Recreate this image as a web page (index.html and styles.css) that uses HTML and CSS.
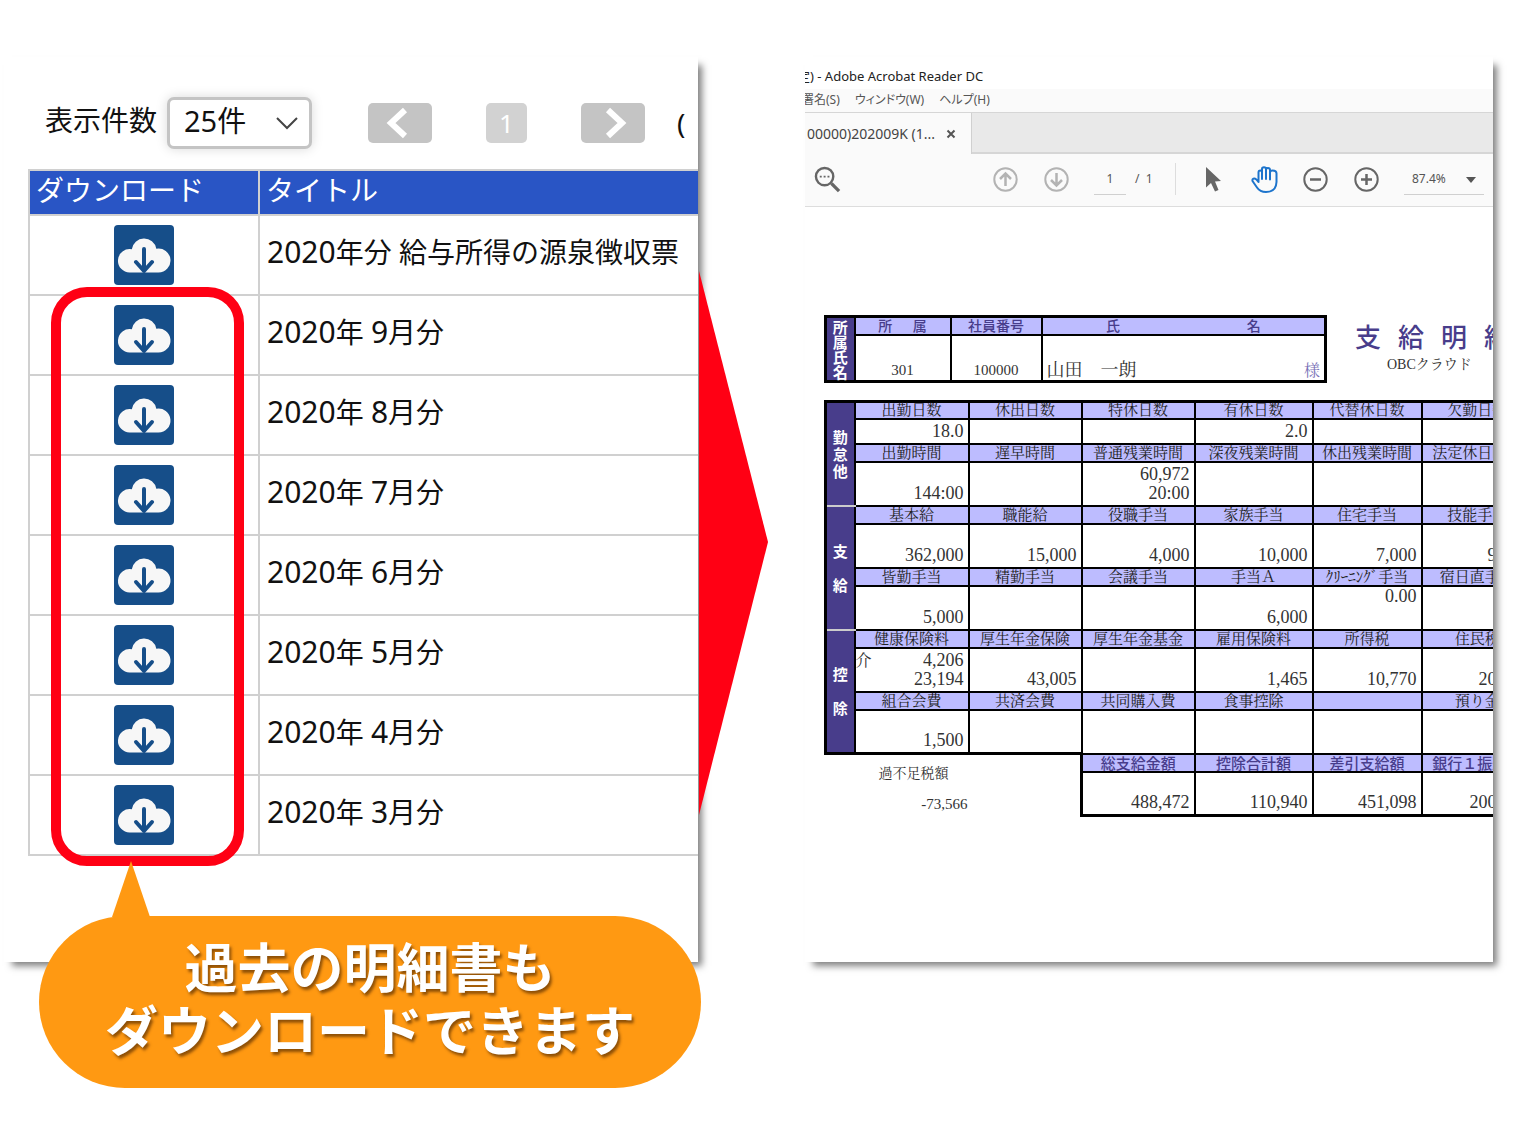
FILE: index.html
```
<!DOCTYPE html>
<html lang="ja">
<head>
<meta charset="utf-8">
<title>過去の明細書のダウンロード</title>
<link rel="stylesheet" href="styles.css">
</head>
<body>
<svg class="defs" aria-hidden="true">
  <symbol id="cloud" viewBox="0 0 60 60">
    <path fill="#f7f7f7" d="M16 47.500A11.700 11.700 0 1 1 17.800 24.300A12.400 12.400 0 0 1 42.300 23.700A12 12 0 1 1 44.500 47.500Z"/>
    <path fill="none" stroke="#164e89" stroke-width="4" stroke-linecap="round" stroke-linejoin="round" d="M30 24V46M22 37L30 46L38 37"/>
  </symbol>
</svg>
<main class="scene">
  <section class="panel list">
    <div class="clip list-body">
      <div class="pager">
        <label for="count">表示件数</label>
        <span class="count">
          <select id="count"><option>25件</option></select>
          <svg viewBox="0 0 24 14"><path d="M2 2L12 12L22 2" fill="none" stroke="#444" stroke-width="2"/></svg>
        </span>
        <button class="nav prev" aria-label="前へ"><svg viewBox="0 0 24 32"><path d="M20 3L6 16L20 29" fill="none" stroke="#fff" stroke-width="6"/></svg></button>
        <button class="nav current">1</button>
        <button class="nav next" aria-label="次へ"><svg viewBox="0 0 24 32"><path d="M4 3L18 16L4 29" fill="none" stroke="#fff" stroke-width="6"/></svg></button>
        <span class="total">(</span>
      </div>
      <div class="files-wrap">
        <table class="files">
          <thead><tr><th class="dl">ダウンロード</th><th>タイトル</th></tr></thead>
          <tbody>
            <tr><td class="dl"><button aria-label="ダウンロード"><svg><use href="#cloud"/></svg></button></td><td><span class="num">2020</span>年分 給与所得の源泉徴収票</td></tr>
            <tr><td class="dl"><button aria-label="ダウンロード"><svg><use href="#cloud"/></svg></button></td><td><span class="num">2020</span>年 <span class="num">9</span>月分</td></tr>
            <tr><td class="dl"><button aria-label="ダウンロード"><svg><use href="#cloud"/></svg></button></td><td><span class="num">2020</span>年 <span class="num">8</span>月分</td></tr>
            <tr><td class="dl"><button aria-label="ダウンロード"><svg><use href="#cloud"/></svg></button></td><td><span class="num">2020</span>年 <span class="num">7</span>月分</td></tr>
            <tr><td class="dl"><button aria-label="ダウンロード"><svg><use href="#cloud"/></svg></button></td><td><span class="num">2020</span>年 <span class="num">6</span>月分</td></tr>
            <tr><td class="dl"><button aria-label="ダウンロード"><svg><use href="#cloud"/></svg></button></td><td><span class="num">2020</span>年 <span class="num">5</span>月分</td></tr>
            <tr><td class="dl"><button aria-label="ダウンロード"><svg><use href="#cloud"/></svg></button></td><td><span class="num">2020</span>年 <span class="num">4</span>月分</td></tr>
            <tr><td class="dl"><button aria-label="ダウンロード"><svg><use href="#cloud"/></svg></button></td><td><span class="num">2020</span>年 <span class="num">3</span>月分</td></tr>
          </tbody>
        </table>
        <div class="highlight"></div>
      </div>
    </div>
    <div class="callout">
      <svg class="tail" viewBox="0 0 38 56"><path d="M19 0L38 56H0Z" fill="#ff9912"/></svg>
      <p>過去の明細書も<br>ダウンロードできます</p>
    </div>
  </section>

  <svg class="arrow" viewBox="0 0 69 544" preserveAspectRatio="none"><path d="M0 0L69 271L0 544Z" fill="#ff0014"/></svg>

  <section class="panel viewer">
    <div class="clip">
      <div class="titlebar"><span>定) - Adobe Acrobat Reader DC</span></div>
      <nav class="menubar"><span class="cut">署名(S)</span><span>ウィンドウ(W)</span><span>ヘルプ(H)</span></nav>
      <div class="tabs"><div class="tab">00000)202009K (1...<button aria-label="閉じる"><svg viewBox="0 0 10 10"><path d="M1.500 1.500L8.500 8.500M8.500 1.500L1.500 8.500" stroke="#555" stroke-width="2"/></svg></button></div></div>
      <div class="tools">
        <button class="find" aria-label="検索"><svg viewBox="0 0 28 28"><g fill="none" stroke="#666"><circle cx="11" cy="11" r="9" stroke-width="2.500"/><path d="M18 18L26 26" stroke-width="3.500"/><path d="M6 11H16" stroke-width="2" stroke-dasharray="2 2"/></g></svg></button>
        <button aria-label="前のページ"><svg viewBox="0 0 27 27"><g fill="none" stroke="#b3b3b3" stroke-width="2"><circle cx="13.500" cy="13.500" r="11.200"/><path d="M13.500 20V8M8 13L13.500 7.500L19 13" stroke-width="2.500"/></g></svg></button>
        <button aria-label="次のページ"><svg viewBox="0 0 27 27"><g fill="none" stroke="#b3b3b3" stroke-width="2"><circle cx="13.500" cy="13.500" r="11.200"/><path d="M13.500 7V19M8 14L13.500 19.500L19 14" stroke-width="2.500"/></g></svg></button>
        <input class="page" aria-label="ページ" value="1">
        <span class="pages">/&nbsp; 1</span>
        <button aria-label="選択"><svg viewBox="0 0 27 27"><path fill="#666" d="M6 1V21.500L11 17L15 25.500L18.500 24L15 15.500L21 15Z"/></svg></button>
        <button aria-label="手のひら"><svg viewBox="0 0 27 27"><path fill="none" stroke="#1d74cc" stroke-width="2" stroke-linecap="round" stroke-linejoin="round" d="M7.500 16V6.500Q7.500 4.500 9.200 4.500Q11 4.500 11 6.500V13M11 12V3Q11 1.200 13 1.200Q15 1.200 15 3V13M15 4Q15 2 16.900 2Q19 2 19 4V13.500M19 13.500V6.500Q19 4.500 21.500 4.500Q25.500 4.500 25.500 7.500V16Q25 26 15 26Q9 26 6 21.500L1.500 15Q1 12.500 3.500 12.500Q5 12.500 7.500 16"/></svg></button>
        <button aria-label="縮小"><svg viewBox="0 0 27 27"><g fill="none" stroke="#666" stroke-width="2"><circle cx="13.500" cy="13.500" r="11.200"/><path d="M8 13.500H19" stroke-width="2.500"/></g></svg></button>
        <button aria-label="拡大"><svg viewBox="0 0 27 27"><g fill="none" stroke="#666" stroke-width="2"><circle cx="13.500" cy="13.500" r="11.200"/><path d="M8 13.500H19M13.500 8V19" stroke-width="2.500"/></g></svg></button>
        <span class="zoom"><select aria-label="倍率"><option>87.4%</option></select><svg viewBox="0 0 10 6"><path d="M0 0H10L5 6Z" fill="#555"/></svg></span>
      </div>

      <div class="paper">
        <div class="paper-head">
          <table class="slip person">
            <colgroup><col class="c-side"><col class="c-dept"><col class="c-id"><col class="c-name"></colgroup>
            <tr class="h"><th class="side tight" rowspan="2">所<br>属<br>氏<br>名</th><th>所　&nbsp; 属</th><th>社員番号</th><th><div class="spread"><span>氏</span><span>名</span></div></th></tr>
            <tr class="v"><td>301</td><td>100000</td><td><div class="name"><span>山田　一朗</span><span class="sama">様</span></div></td></tr>
          </table>
          <div class="heading">
            <h1><span>支</span><span>給</span><span>明</span><span>細</span><span>書</span></h1>
            <p>OBCクラウド</p>
          </div>
        </div>

        <table class="slip pay">
          <colgroup><col class="c-side"><col class="c1"><col class="c2"><col class="c2"><col class="c4"><col class="c5"><col class="c6"></colgroup>
          <tbody>
            <tr class="h first"><th class="side" rowspan="4">勤<br>怠<br>他</th><th>出勤日数</th><th>休出日数</th><th>特休日数</th><th>有休日数</th><th>代替休日数</th><th>欠勤日数</th></tr>
            <tr class="v short"><td>18.0</td><td></td><td></td><td>2.0</td><td></td><td></td></tr>
            <tr class="h"><th>出勤時間</th><th>遅早時間</th><th>普通残業時間</th><th>深夜残業時間</th><th>休出残業時間</th><th>法定休日時間</th></tr>
            <tr class="v"><td>144:00</td><td></td><td>60,972<br>20:00</td><td></td><td></td><td></td></tr>
          </tbody>
          <tbody>
            <tr class="h"><th class="side wide" rowspan="4">支<br>給</th><th>基本給</th><th>職能給</th><th>役職手当</th><th>家族手当</th><th>住宅手当</th><th>技能手当</th></tr>
            <tr class="v"><td>362,000</td><td>15,000</td><td>4,000</td><td>10,000</td><td>7,000</td><td>9,000</td></tr>
            <tr class="h"><th>皆勤手当</th><th>精勤手当</th><th>会議手当</th><th>手当Ａ</th><th>ｸﾘｰﾆﾝｸﾞ手当</th><th>宿日直手当</th></tr>
            <tr class="v"><td>5,000</td><td></td><td></td><td>6,000</td><td class="upper">0.00</td><td></td></tr>
          </tbody>
          <tbody>
            <tr class="h"><th class="side wide" rowspan="4">控<br>除</th><th>健康保険料</th><th>厚生年金保険</th><th>厚生年金基金</th><th>雇用保険料</th><th>所得税</th><th>住民税</th></tr>
            <tr class="v"><td><span class="mark">介</span>4,206<br>23,194</td><td>43,005</td><td></td><td>1,465</td><td>10,770</td><td>20,000</td></tr>
            <tr class="h"><th>組合会費</th><th>共済会費</th><th>共同購入費</th><th>食事控除</th><th></th><th>預り金</th></tr>
            <tr class="v"><td>1,500</td><td></td><td></td><td></td><td></td><td></td></tr>
          </tbody>
          <tbody class="sum">
            <tr class="h"><td class="adjust" colspan="3" rowspan="2"><div class="adjust-label">過不足税額</div><div class="adjust-value">-73,566</div></td><th>総支給金額</th><th>控除合計額</th><th>差引支給額</th><th>銀行１振込額</th></tr>
            <tr class="v"><td>488,472</td><td>110,940</td><td>451,098</td><td>200,000</td></tr>
          </tbody>
        </table>
      </div>
    </div>
  </section>
</main>
</body>
</html>
```
FILE: styles.css
```
* { box-sizing: border-box; }

body {
  margin: 0;
  background: #fff;
  color: #111;
  font-family: "Noto Sans", "Noto Sans CJK JP", sans-serif;
}

button, input, select { font: inherit; color: inherit; margin: 0; }
button { padding: 0; border: 0; background: none; display: block; flex: none; }
p, h1 { margin: 0; }
svg { display: block; }
.defs { position: absolute; width: 0; height: 0; }

.scene {
  display: grid;
  grid-template-columns: minmax(0, 694fr) 107px minmax(0, 688fr);
  padding: 57px 31px 164px 4px;
}

.panel {
  position: relative;
  background: #fff;
  box-shadow: 6px 6px 7px -2px rgba(0, 0, 0, 0.5);
}
.clip { overflow: hidden; height: 100%; }
.arrow { width: 69px; height: 544px; margin: 214px 0 0 1px; position: relative; }

/* Download list */
.list-body { padding: 40px 0 106px 24px; font-size: 28px; }
.pager { display: flex; align-items: center; padding-left: 17px; height: 52px; white-space: nowrap; }
.pager label { line-height: 42px; margin: 0 10px 6px 0; flex: none; }
.count { position: relative; flex: none; width: 145px; margin-right: 56px; }
.count select {
  appearance: none;
  width: 100%;
  height: 52px;
  padding: 0 0 5px 14px;
  border: 3px solid #c4c4c4;
  border-radius: 7px;
  background: #fff;
  box-shadow: 0 0 12px rgba(0, 0, 0, 0.15);
  font-size: 29px;
}
.count svg { position: absolute; right: 13px; top: 19px; width: 24px; height: 14px; pointer-events: none; }
.nav { height: 40px; border-radius: 5px; background: #c4c4c4; color: #fff; display: flex; align-items: center; justify-content: center; }
.nav svg { width: 24px; height: 32px; }
.prev, .next { width: 64px; }
.prev { padding-right: 6px; }
.next { padding-left: 6px; }
.current { width: 41px; margin: 0 54px; background: #d2d2d2; font-size: 26px; }
.total { margin-left: 32px; }

.files-wrap { position: relative; margin-top: 20px; }
.files { width: 100%; border-collapse: collapse; table-layout: fixed; white-space: nowrap; }
.files th, .files td { border: 2px solid #d0d0d0; border-right: 0; text-align: left; font-weight: 400; }
.files th { height: 45px; padding: 0 0 4px 6px; background: #2955c5; color: #fff; line-height: 39px; }
.files td { height: 80px; padding: 0 0 6px 7px; line-height: 42px; }
.files .dl { width: 230px; }
.files td.dl { padding: 0; }
.files td button { width: 60px; height: 60px; margin: 0 auto; border-radius: 4px; background: #164e89; }
.files td svg { width: 60px; height: 60px; }
.num { font-size: 30px; }

.highlight {
  position: absolute;
  left: 23px;
  top: 118px;
  bottom: -10px;
  width: 193px;
  border: 10px solid #ff0014;
  border-radius: 36px;
  pointer-events: none;
}

.callout {
  position: absolute;
  z-index: 1;
  left: 35px;
  right: -3px;
  bottom: -126px;
  height: 172px;
  border-radius: 86px;
  background: #ff9912;
  color: #fff;
  font: bold 53px/63px "Noto Sans CJK JP", sans-serif;
  text-align: center;
  white-space: nowrap;
  text-shadow: 2px 3px 3px rgba(80, 40, 0, 0.65);
  padding-top: 18px;
}
.tail { position: absolute; left: 73px; top: -55px; width: 38px; height: 56px; }

/* Document viewer */
.viewer { font-size: 14px; color: #333; white-space: nowrap; }
.titlebar { display: flex; height: 32px; padding-top: 9px; font-size: 13px; line-height: 20px; color: #222; }
.titlebar span { margin-left: -8px; }
.menubar {
  display: flex;
  gap: 15px;
  height: 23px;
  background: #fafafa;
  font-size: 12px;
  line-height: 22px;
  color: #555;
  font-feature-settings: "palt";
}
.menubar .cut { margin-left: -3px; }
.tabs { display: flex; height: 42px; background: #e9e9e9; border-top: 1px solid #d6d6d6; box-shadow: inset 0 -2px #d6d6d6; }
.tab { display: flex; align-items: center; gap: 11px; width: 167px; padding-left: 2px; background: #fafafa; border-right: 1px solid #d0d0d0; color: #444; font-size: 14px; }
.tab svg { width: 10px; height: 10px; }
.tools { display: flex; align-items: center; gap: 24px; height: 53px; padding: 0 0 2px 9px; background: #fafafa; border-bottom: 1px solid #ddd; color: #555; font-size: 12px; }
.tools button svg { width: 27px; height: 27px; }
.tools .find { margin-right: 127px; }
.page { width: 32px; height: 32px; padding: 0; border: 0; border-bottom: 1px solid #d0d0d0; background: none; text-align: center; flex: none; }
.pages { width: 41px; margin-left: -15px; height: 32px; line-height: 32px; border-right: 1px solid #ddd; flex: none; }
.zoom { position: relative; width: 80px; flex: none; }
.zoom select { appearance: none; width: 100%; height: 32px; padding: 0 8px; border: 0; border-bottom: 1px solid #d0d0d0; border-radius: 0; background: none; font-size: 12px; }
.zoom svg { position: absolute; right: 8px; top: 14px; width: 10px; height: 6px; pointer-events: none; }

/* Pay slip */
.paper { padding: 108px 0 0 19px; background: #fff; }
.paper-head { display: flex; align-items: flex-start; gap: 28px; margin-bottom: 17px; }
.slip {
  border-collapse: collapse;
  table-layout: fixed;
  border: 3px solid #000;
  font-family: "Liberation Serif", "Noto Serif CJK JP", "Noto Sans CJK JP", serif;
  flex: none;
}
.slip th { padding: 0; border: 2px solid #000; background: #bdbcff; color: #222; font-size: 15px; line-height: 14px; font-weight: 400; }
.slip td { padding: 0 4px 2px; border: 2px solid #000; font-size: 18px; line-height: 19px; text-align: right; vertical-align: bottom; color: #333; }
.slip th.side {
  background: #483d8b;
  color: #fff;
  font: bold 15px/17px "Noto Sans CJK JP", sans-serif;
  border-bottom-color: #ccc;
  border-top-color: #ccc;
}
.slip th.tight { line-height: 15px; }
.slip th.wide { line-height: 34px; }
.h { height: 18px; }
.h.first { height: 17px; }
.v { height: 44px; }
.v.short { height: 25px; }
.c-side { width: 29px; }

.person { width: 503px; }
.person .v { height: 47px; }
.c-dept { width: 96px; }
.c-id { width: 91px; }
.person th { font: 500 14px/14px "Noto Sans CJK JP", sans-serif; color: #483d8b; padding-bottom: 1px; }
.person td { font-size: 15px; text-align: center; padding-bottom: 0; }
.spread { display: flex; justify-content: space-around; }
.name { display: flex; justify-content: space-between; font-size: 18px; }
.sama { color: #7a72b8; font-size: 16px; }

.heading { padding-top: 4px; }
.heading h1 { display: flex; gap: 17px; font: 500 26px/34px "Noto Sans CJK JP", sans-serif; color: #483d8b; }
.heading p { padding-left: 32px; font: 14px/24px "Liberation Serif", "Noto Serif CJK JP", "Noto Sans CJK JP", serif; }

.pay { width: 710px; border-bottom: 0; border-right: 0; border-left: 0; }
.pay th.side { border-left: 3px solid #000; }
.c1 { width: 114px; }
.c2 { width: 113px; }
.c4 { width: 118px; }
.c5 { width: 109px; }
.mark { float: left; margin-left: -4px; font-size: 16px; }
.slip td.upper { vertical-align: top; }
.sum th { font: 500 15px/14px "Noto Sans CJK JP", sans-serif; color: #483d8b; }
.sum .v td { border-bottom-width: 3px; }
.slip td.adjust { border: 0; border-top: 3px solid #000; border-right: 3px solid #000; vertical-align: top; padding: 9px 0 0; font-size: 14px; }
.adjust-label { padding-left: 53px; text-align: left; }
.adjust-value { width: 142px; padding-top: 12px; font-size: 15px; }
```
